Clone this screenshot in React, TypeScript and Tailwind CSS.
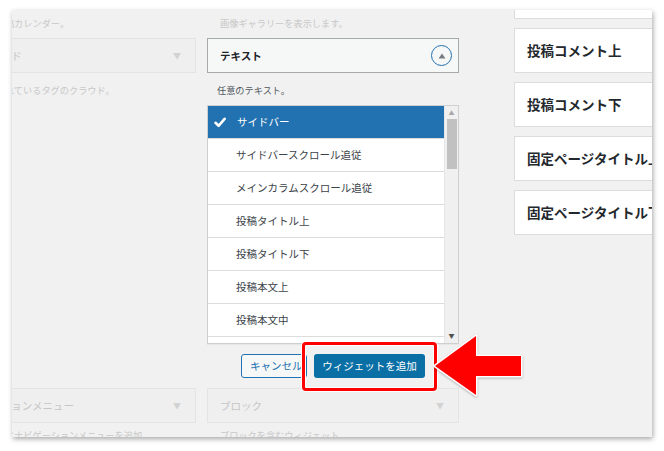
const areas = [
  { name: "サイドバー", selected: true },
  { name: "サイドバースクロール追従" },
  { name: "メインカラムスクロール追従" },
  { name: "投稿タイトル上" },
  { name: "投稿タイトル下" },
  { name: "投稿本文上" },
  { name: "投稿本文中" },
  { name: "投稿本文下" },
]

const rightAreas = ["投稿本文下", "投稿コメント上", "投稿コメント下", "固定ページタイトル上", "固定ページタイトル下"]

const FadedBox = ({ title }: { title: string }) => (
  <div className="h-[35px] flex items-center justify-between pl-[12px] pr-[14px] bg-[#efefef] border border-[#e4e4e4] text-[10.5px] text-[#c6c6c6] whitespace-nowrap">
    <span>{title}</span>
    <span className="text-[8px] text-[#d2d2d2]">▼</span>
  </div>
)

const Check = () => (
  <svg width="12" height="11" viewBox="0 0 12 11" className="shrink-0">
    <path d="M1.5 5.8 L4.6 8.8 L10.6 1.8" fill="none" stroke="white" strokeWidth="2.6" strokeLinecap="round" strokeLinejoin="round" />
  </svg>
)

const AreaList = () => (
  <div className="h-[239px] flex border border-[#cfcfcf] bg-white overflow-hidden shadow-[0_1px_1px_rgba(0,0,0,0.04)]">
    <div className="flex-1 flex flex-col overflow-hidden">
      {areas.map((a) =>
        a.selected ? (
          <div key={a.name} className="h-[32px] shrink-0 flex items-center gap-[11px] pl-[6px] bg-[#2271b1] text-white text-[10.5px]">
            <Check />
            <span>{a.name}</span>
          </div>
        ) : (
          <div key={a.name} className="h-[33px] shrink-0 flex items-center pl-[28px] border-t border-[#dcdcdc] text-[#3c434a] text-[10.5px]">
            {a.name}
          </div>
        )
      )}
    </div>
    <div className="w-[14px] bg-[#f0f0f0] border-l border-[#e6e6e6] flex flex-col items-center">
      <span className="text-[6px] leading-[12px] text-[#a9a9a9] mt-[1px]">▲</span>
      <div className="w-[10px] h-[50px] bg-[#c1c1c1]" />
      <div className="flex-1" />
      <span className="text-[6px] leading-[12px] text-[#505050] mb-[1px]">▼</span>
    </div>
  </div>
)

export default function App() {
  return (
    <div className="relative w-[664px] h-[451px] bg-white overflow-hidden font-['Noto_Sans_CJK_JP','Noto_Sans',sans-serif]">
      <div className="ml-[12px] mt-[10px] w-[640px] h-[427px] bg-[#f1f1f1] overflow-hidden shadow-[1px_2px_5px_rgba(0,0,0,0.35)]">
        <div className="flex items-start ml-[-66px]">
          {/* left column, faded */}
          <div className="w-[250px] shrink-0 flex flex-col pt-[6px]">
            <p className="h-[14px] leading-[14px] pl-[13px] text-[9.2px] text-[#c8c8c8] whitespace-nowrap">サイトの投稿カレンダー。</p>
            <div className="mt-[8px]">
              <FadedBox title="タグクラウド" />
            </div>
            <p className="mt-[10px] h-[14px] leading-[14px] pl-[13px] text-[9.2px] text-[#c8c8c8] whitespace-nowrap">よく使用されているタグのクラウド。</p>
            <div className="mt-[291px]">
              <FadedBox title="ナビゲーションメニュー" />
            </div>
            <p className="mt-[5px] h-[14px] leading-[14px] pl-[13px] text-[9.2px] text-[#c8c8c8] whitespace-nowrap">サイドバーにナビゲーションメニューを追加。</p>
          </div>

          {/* middle column */}
          <div className="w-[252px] shrink-0 ml-[11px] flex flex-col pt-[6px]">
            <p className="h-[14px] leading-[14px] pl-[13px] text-[9.2px] text-[#c8c8c8] whitespace-nowrap">画像ギャラリーを表示します。</p>
            <div className="mt-[8px] h-[35px] flex items-center justify-between pl-[12px] pr-[6px] bg-[#f6f7f7] border border-[#a7aaad]">
              <span className="text-[10.5px] font-semibold text-[#1d2327]">テキスト</span>
              <span className="w-[21px] h-[21px] rounded-full border-[1.5px] border-[#2271b1] flex items-center justify-center">
                <svg width="8" height="6" viewBox="0 0 8 6">
                  <path d="M4 0.5 L7.5 5.5 L0.5 5.5 Z" fill="#787c82" />
                </svg>
              </span>
            </div>
            <p className="mt-[10px] h-[14px] leading-[14px] pl-[10px] text-[9.2px] text-[#50575e] whitespace-nowrap">任意のテキスト。</p>
            <div className="mt-[8px]">
              <AreaList />
            </div>
            <div className="mt-[10px] h-[24px] flex justify-center gap-[7px]">
              <button className="w-[66px] h-[24px] rounded-[3px] border border-[#2271b1] bg-[#f6f7f7] text-[#2271b1] text-[10.5px] text-left pl-[8px]">キャンセル</button>
              <button className="w-[111px] h-[24px] rounded-[3px] bg-[#0a6fa5] text-white text-[10.5px]">ウィジェットを追加</button>
            </div>
            <div className="mt-[10px]">
              <FadedBox title="ブロック" />
            </div>
            <p className="mt-[5px] h-[14px] leading-[14px] pl-[13px] text-[9.2px] text-[#c8c8c8] whitespace-nowrap">ブロックを含むウィジェット。</p>
          </div>

          {/* right column */}
          <div className="w-[200px] shrink-0 ml-[55px] mt-[-36px] flex flex-col gap-[9px]">
            {rightAreas.map((t) => (
              <div key={t} className="h-[45px] flex items-center pl-[12px] bg-white border border-[#dcdcdc] text-[13.5px] font-semibold text-[#23282d] whitespace-nowrap">
                {t}
              </div>
            ))}
          </div>
        </div>
      </div>

      {/* highlight */}
      <div className="absolute left-[302px] top-[342px] w-[135px] h-[49px] rounded-[4px] border-[3px] border-[#ff0000] shadow-[0_0_0_1px_white,inset_0_0_0_1px_white]" />
      <svg className="absolute left-[430px] top-[330px] drop-shadow-[0_1px_1px_rgba(0,0,0,0.25)]" width="96" height="72" viewBox="0 0 96 72">
        <path d="M5 36 L46 6 L46 26 L91 26 L91 46 L46 46 L46 65 Z" fill="#ff0000" stroke="white" strokeWidth="3" strokeLinejoin="round" paintOrder="stroke" />
      </svg>
    </div>
  )
}
